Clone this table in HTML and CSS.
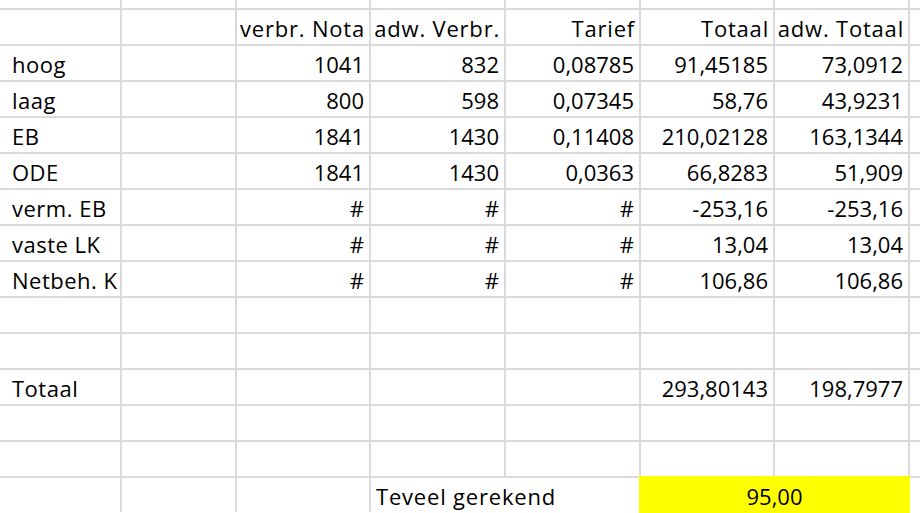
FILE: index.html
```html
<!DOCTYPE html>
<html lang="nl">
<head>
<meta charset="utf-8">
<title>Teveel gerekend</title>
<link rel="stylesheet" href="styles.css">
</head>
<body>
<div class="sheet">
  <!-- top partial row -->
  <div class="c"></div><div class="c"></div><div class="c"></div><div class="c"></div><div class="c"></div><div class="c"></div><div class="c"></div><div class="c"></div><div class="c"></div>

  <!-- header -->
  <div class="c"></div><div class="c"></div><div class="c"></div>
  <div class="c r t">verbr. Nota</div><div class="c r t">adw. Verbr.</div><div class="c r t">Tarief</div><div class="c r t">Totaal</div><div class="c r t">adw. Totaal</div>
  <div class="c"></div>

  <div class="c"></div><div class="c l lbl">hoog</div><div class="c"></div>
  <div class="c r">1041</div><div class="c r">832</div><div class="c r">0,08785</div><div class="c r">91,45185</div><div class="c r">73,0912</div>
  <div class="c"></div>

  <div class="c"></div><div class="c l lbl">laag</div><div class="c"></div>
  <div class="c r">800</div><div class="c r">598</div><div class="c r">0,07345</div><div class="c r">58,76</div><div class="c r">43,9231</div>
  <div class="c"></div>

  <div class="c"></div><div class="c l lbl">EB</div><div class="c"></div>
  <div class="c r">1841</div><div class="c r">1430</div><div class="c r">0,11408</div><div class="c r">210,02128</div><div class="c r">163,1344</div>
  <div class="c"></div>

  <div class="c"></div><div class="c l lbl">ODE</div><div class="c"></div>
  <div class="c r">1841</div><div class="c r">1430</div><div class="c r">0,0363</div><div class="c r">66,8283</div><div class="c r">51,909</div>
  <div class="c"></div>

  <div class="c"></div><div class="c l lbl">verm. EB</div><div class="c"></div>
  <div class="c r">#</div><div class="c r">#</div><div class="c r">#</div><div class="c r">-253,16</div><div class="c r">-253,16</div>
  <div class="c"></div>

  <div class="c"></div><div class="c l lbl">vaste LK</div><div class="c"></div>
  <div class="c r">#</div><div class="c r">#</div><div class="c r">#</div><div class="c r">13,04</div><div class="c r">13,04</div>
  <div class="c"></div>

  <div class="c"></div><div class="c l lbl">Netbeh. K</div><div class="c"></div>
  <div class="c r">#</div><div class="c r">#</div><div class="c r">#</div><div class="c r">106,86</div><div class="c r">106,86</div>
  <div class="c"></div>

  <div class="c"></div><div class="c"></div><div class="c"></div><div class="c"></div><div class="c"></div><div class="c"></div><div class="c"></div><div class="c"></div><div class="c"></div>
  <div class="c"></div><div class="c"></div><div class="c"></div><div class="c"></div><div class="c"></div><div class="c"></div><div class="c"></div><div class="c"></div><div class="c"></div>

  <div class="c"></div><div class="c l lbl">Totaal</div><div class="c"></div>
  <div class="c"></div><div class="c"></div><div class="c"></div><div class="c r">293,80143</div><div class="c r">198,7977</div>
  <div class="c"></div>

  <div class="c"></div><div class="c"></div><div class="c"></div><div class="c"></div><div class="c"></div><div class="c"></div><div class="c"></div><div class="c"></div><div class="c"></div>
  <div class="c"></div><div class="c"></div><div class="c"></div><div class="c"></div><div class="c"></div><div class="c"></div><div class="c"></div><div class="c"></div><div class="c"></div>

  <div class="c"></div><div class="c"></div><div class="c"></div><div class="c"></div>
  <div class="c l t span2">Teveel gerekend</div>
  <div class="c ctr span2 hl">95,00</div>
  <div class="c"></div>
</div>
</body>
</html>
```

FILE: styles.css
```css
html, body {
  margin: 0;
  padding: 0;
  background: #ffffff;
}

body {
  width: 920px;
  height: 513px;
  overflow: hidden;
  font-family: "Open Sans", Lato, "Liberation Sans", sans-serif;
  font-size: 22px;
  color: #000000;
}

.sheet {
  display: grid;
  grid-template-columns: 5px 113px 113px 132px 133px 133px 132px 133px 10px;
  grid-template-rows: 8px repeat(14, 34px);
  gap: 2px;
  background: #dadada;
  width: 920px;
}

.c {
  background: #ffffff;
  display: flex;
  align-items: flex-end;
  white-space: nowrap;
  line-height: 24px;
  padding: 0 5px 4px 5px;
  min-width: 0;
  box-sizing: border-box;
}

.t {
  letter-spacing: 0.8px;
}

.lbl {
  letter-spacing: 0.5px;
}

.r.t {
  padding-right: 4px;
}

.r {
  justify-content: flex-end;
}

.l {
  justify-content: flex-start;
}

.ctr {
  justify-content: center;
}

.span2 {
  grid-column: span 2;
}

.hl {
  background: #ffff00;
  box-shadow: 0 0 0 2px #ffff00;
}
```
